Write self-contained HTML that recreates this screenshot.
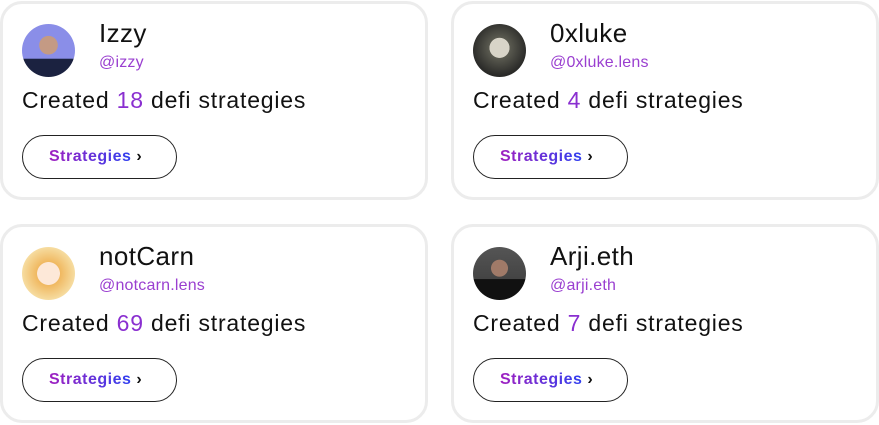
<!DOCTYPE html>
<html><head><style>
body{margin:0;width:879px;height:425px;background:#fff;font-family:"Liberation Sans",sans-serif;position:relative;overflow:hidden}
.card{position:absolute;width:422px;height:193px;border:3px solid #ececec;border-radius:22px;box-sizing:content-box}
.av{position:absolute;left:19px;top:20px;width:53px;height:53px;border-radius:50%}
.name{position:absolute;left:96px;top:14px;font-size:26px;color:#111;letter-spacing:0.4px}
.handle{position:absolute;left:96px;top:50px;font-size:16px;color:#9a3fd0;letter-spacing:0.2px}
.cr{position:absolute;left:19px;top:83px;font-size:23px;color:#111;letter-spacing:0.8px}
.cr b{font-weight:normal;color:#8a2fd0}
.btn{position:absolute;left:19px;top:131px;width:155px;height:44px;border:1px solid #222;border-radius:23px;box-sizing:border-box;font-size:16px;font-weight:bold;padding-left:26px;line-height:42px;letter-spacing:0.5px}
.btn span{background:linear-gradient(90deg,#a020c0,#3040f0);-webkit-background-clip:text;color:transparent}
.btn i{font-style:normal;color:#111;margin-left:5px}
</style></head><body>
<div class="card" style="left:0;top:1px">
<div class="av" style="background:radial-gradient(circle at 50% 40%,#c49a84 0 22%,transparent 23%),linear-gradient(180deg,#8a8ee8 0,#8a8ee8 65%,#1b2240 66%)"></div>
<div class="name">Izzy</div><div class="handle">@izzy</div>
<div class="cr">Created <b>18</b> defi strategies</div>
<div class="btn"><span>Strategies</span><i>›</i></div></div>
<div class="card" style="left:451px;top:1px">
<div class="av" style="background:radial-gradient(circle at 50% 45%,#d8d4c8 0 25%,#5a5a50 26%,#2a2a28 70%)"></div>
<div class="name">0xluke</div><div class="handle">@0xluke.lens</div>
<div class="cr">Created <b>4</b> defi strategies</div>
<div class="btn"><span>Strategies</span><i>›</i></div></div>
<div class="card" style="left:0;top:224px">
<div class="av" style="background:radial-gradient(circle at 50% 50%,#fde8d8 0 30%,#f0b860 31%,#f6dca0 70%)"></div>
<div class="name">notCarn</div><div class="handle">@notcarn.lens</div>
<div class="cr">Created <b>69</b> defi strategies</div>
<div class="btn"><span>Strategies</span><i>›</i></div></div>
<div class="card" style="left:451px;top:224px">
<div class="av" style="background:radial-gradient(circle at 50% 40%,#a07a68 0 20%,transparent 21%),linear-gradient(180deg,#555 0,#444 60%,#111 61%)"></div>
<div class="name">Arji.eth</div><div class="handle">@arji.eth</div>
<div class="cr">Created <b>7</b> defi strategies</div>
<div class="btn"><span>Strategies</span><i>›</i></div></div>
</body></html>
